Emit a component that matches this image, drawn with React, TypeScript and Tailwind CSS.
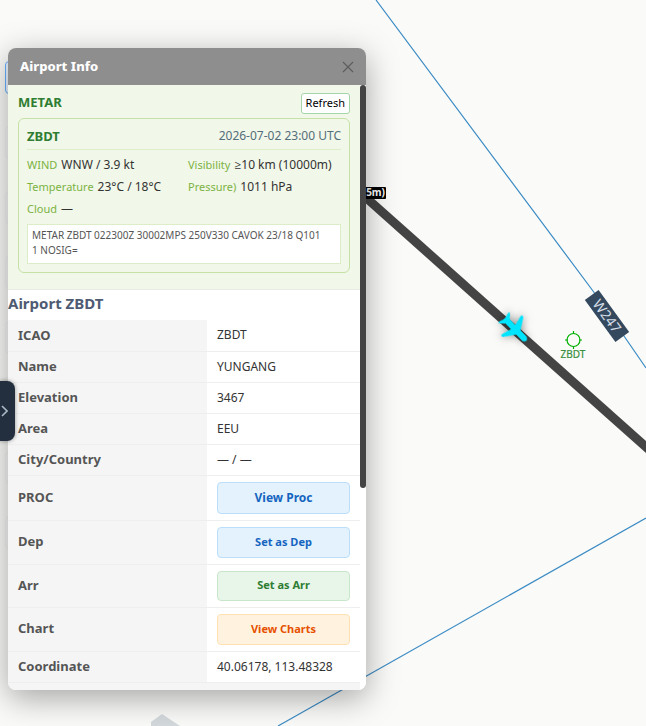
import { useState } from "react";

const metarItems = [
  { label: "WIND", value: "WNW / 3.9 kt" },
  { label: "Visibility", value: "≥10 km (10000m)" },
  { label: "Temperature", value: "23°C / 18°C" },
  { label: "Pressure)", value: "1011 hPa" },
  { label: "Cloud", value: "—" },
];

const details = [
  { label: "ICAO", value: "ZBDT" },
  { label: "Name", value: "YUNGANG" },
  { label: "Elevation", value: "3467" },
  { label: "Area", value: "EEU" },
  { label: "City/Country", value: "— / —" },
];

const actions = [
  { label: "PROC", text: "View Proc", row: "h-[45px]", style: "h-8 text-xs bg-[#e3f2fd] border-[#bbdefb] text-[#1565c0]" },
  { label: "Dep", text: "Set as Dep", row: "h-11", style: "h-[31px] text-[11px] bg-[#e3f2fd] border-[#bbdefb] text-[#1565c0]" },
  { label: "Arr", text: "Set as Arr", row: "h-[43px]", style: "h-[30px] text-[11px] bg-[#e8f5e9] border-[#c8e6c9] text-[#2e7d32]" },
  { label: "Chart", text: "View Charts", row: "h-11", style: "h-[31px] text-[11px] bg-[#fff3e0] border-[#ffe0b2] text-[#e65100]" },
];

const labelCell = "w-[199px] bg-[#f5f5f5] px-2.5 text-left text-[13px] font-bold text-[#555]";

function MapLayer() {
  return (
    <svg className="absolute left-0 top-0 h-[726px] w-[646px]" viewBox="0 0 646 726" aria-hidden="true">
      <g stroke="#3b8bc4" strokeWidth="1.2" fill="none">
        <path d="M376 0 L593 291 L646 368" />
        <path d="M646 518 L278 726" />
      </g>
      <path d="M151 722 L162 714 L180 726 L151 726 Z" fill="#d3d9dc" />
      <path d="M340 174.5 L660 459.5" stroke="#444" strokeWidth="9" />

      <g transform="translate(607 316) rotate(54)">
        <rect x="-26" y="-8.5" width="52" height="17" fill="#34495e" />
        <text y="5" textAnchor="middle" fontSize="14" fill="#d5dde5">W247</text>
      </g>

      <g stroke="#00b000" strokeWidth="1.2" fill="none">
        <circle cx="573.5" cy="340" r="6.5" />
        <path d="M573.5 331v3 M573.5 346v3 M565 340h3 M579 340h3" />
      </g>
      <text x="573" y="358" textAnchor="middle" fontSize="10" fill="#388e3c" stroke="#388e3c" strokeWidth="0.2">ZBDT</text>

      <g
        className="drop-shadow-[0_0_4px_rgba(0,0,0,0.5)]"
        transform="translate(515 329) rotate(46)"
        fill="#00e5ff"
        stroke="#00e5ff"
        strokeLinejoin="round"
      >
        <path d="M-14 -2.5 L13 -2.5 Q16 -2 16 0 Q16 2 13 2.5 L-14 2.5 Z" strokeWidth="1" />
        <path d="M-5 -14 L-3 -14 L5 -2 L5 2 L-3 14 L-5 14 L-2 2 L-2 -2 Z" strokeWidth="1" />
        <path d="M-16 -7 L-15 -7 L-10 -2 L-10 2 L-15 7 L-16 7 L-14 0 Z" strokeWidth="1" />
      </g>

      <rect x="340" y="187" width="46" height="12" rx="1" fill="#000" />
      <text x="385" y="196" textAnchor="end" fontSize="10" fontWeight="700" fill="#fff">5m)</text>
    </svg>
  );
}

// Map tools, mostly covered by the info panel when it is open
function MapTools() {
  const tools = ["Layers", "Routes", "Airports", "Weather", "Waypoints", "Traffic", "Measure", "Settings"];
  return (
    <nav className="absolute left-[5px] top-[61px] flex flex-col gap-8">
      {tools.map((tool, i) => (
        <button
          key={tool}
          type="button"
          aria-label={tool}
          className={`h-[33px] w-8 rounded border ${i === 0 ? "border-[#66b1ff] bg-[#ecf5ff]" : "border-[#f4f4f4] bg-[#f8f8f8]"}`}
        />
      ))}
    </nav>
  );
}

export default function App() {
  const [open, setOpen] = useState(true);

  return (
    <main className="relative min-h-screen overflow-hidden bg-[#fafaf8] pl-2 pt-12 font-['Noto_Sans','Open_Sans',sans-serif] text-[#333]">
      <MapLayer />
      <MapTools />

      {open && (
        <section className="relative w-full max-w-[358px] overflow-hidden rounded-lg bg-white shadow-[0_8px_32px_rgba(0,0,0,0.35)]">
          <header className="flex h-[37px] items-center justify-between bg-[#8e8e8e] px-3">
            <h1 className="text-[13px] font-extrabold text-white">Airport Info</h1>
            <button type="button" aria-label="Close" onClick={() => setOpen(false)} className="text-[#5c5c5c]">
              <svg className="h-3 w-3" viewBox="0 0 12 12" stroke="currentColor" strokeWidth="1.1">
                <path d="M1 1l10 10M11 1L1 11" />
              </svg>
            </button>
          </header>

          <div className="flex max-h-[calc(100vh-121px)]">
            <div className="min-w-0 flex-1 overflow-hidden">
              <div className="border-b border-[#e8ebe4] bg-[#f1f7e9] px-2.5 pb-4 pt-2">
                <div className="flex items-start justify-between">
                  <h2 className="text-[13px] leading-[18px] font-bold text-[#2e7d32]">METAR</h2>
                  <button type="button" className="h-[21px] rounded-[3px] border border-[#a5d6a7] bg-white px-1 text-[11px] text-black">
                    Refresh
                  </button>
                </div>

                <div className="mt-1 rounded-md border border-[#c5e1a5] px-2 py-2">
                  <div className="flex items-center justify-between border-b border-[#dcedc8] pb-1 text-[13px] leading-[18px]">
                    <strong className="text-[#2e7d32]">ZBDT</strong>
                    <span className="text-xs leading-[18px] text-[#546e7a]">2026-07-02 23:00 UTC</span>
                  </div>
                  <dl className="mt-1.5 grid grid-cols-2 gap-x-2 gap-y-1">
                    {metarItems.map((item) => (
                      <div key={item.label} className="flex items-baseline gap-1 whitespace-nowrap leading-[18px]">
                        <dt className="text-[11px] text-[#7cb342]">{item.label}</dt>
                        <dd className="text-xs leading-[18px]">{item.value}</dd>
                      </div>
                    ))}
                  </dl>
                  <p className="mt-1.5 border border-[#dcedc8] bg-white px-1 pb-[5px] pt-[3px] text-[10px] leading-[15px] text-[#555]">
                    METAR ZBDT 022300Z 30002MPS 250V330 CAVOK 23/18 Q101
                    <br />1 NOSIG=
                  </p>
                </div>
              </div>

              <h2 className="h-[30px] text-[15px] leading-[26px] font-bold text-[#4e5b73]">Airport ZBDT</h2>
              <table className="w-full table-fixed border-collapse text-xs">
                <tbody>
                  {details.map((row) => (
                    <tr key={row.label} className="h-[31px] border-b border-[#eee]">
                      <th scope="row" className={labelCell}>{row.label}</th>
                      <td className="px-2.5">{row.value}</td>
                    </tr>
                  ))}
                  {actions.map((row) => (
                    <tr key={row.label} className={`${row.row} border-b border-[#eee]`}>
                      <th scope="row" className={labelCell}>{row.label}</th>
                      <td className="px-2.5">
                        <button type="button" className={`block w-full rounded border font-bold ${row.style}`}>{row.text}</button>
                      </td>
                    </tr>
                  ))}
                  <tr className="h-[31px] border-b border-[#eee]">
                    <th scope="row" className={labelCell}>Coordinate</th>
                    <td className="px-2.5">40.06178, 113.48328</td>
                  </tr>
                  <tr className="h-[31px]">
                    <td colSpan={2} className="bg-[#f5f5f5]" />
                  </tr>
                </tbody>
              </table>
            </div>
            <div className="w-1.5 shrink-0 bg-white">
              <div className="h-2/3 rounded-full bg-[#444]" />
            </div>
          </div>
        </section>
      )}

      <button
        type="button"
        aria-label="Expand sidebar"
        className="absolute left-0 top-[381px] flex h-[60px] w-[15px] items-center rounded-r-lg bg-[#232f3e] text-[#a9b8c4] shadow-[0_0_4px_rgba(0,0,0,0.4)]"
      >
        <svg className="h-3 w-2" viewBox="0 0 8 12" fill="none" stroke="currentColor" strokeWidth="1.6">
          <path d="M2 1l5 5-5 5" />
        </svg>
      </button>
    </main>
  );
}
